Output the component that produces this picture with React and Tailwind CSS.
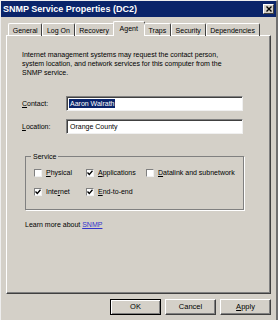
import React from "react";

const tabs = ["General", "Log On", "Recovery", "Agent", "Traps", "Security", "Dependencies"];

const font = { fontFamily: "'Liberation Sans', Arial, sans-serif" };

function Check({ checked }) {
  return (
    <span className="w-[8px] h-[8px] bg-white border border-t-[#808080] border-l-[#808080] border-r-[#f0f0f0] border-b-[#f0f0f0] flex items-center justify-center shrink-0">
      {checked && (
        <svg width="6" height="6" viewBox="0 0 6 6">
          <path d="M0.5 2.5 L2.3 4.5 L5.5 0.8" stroke="#000" strokeWidth="1.3" fill="none" />
        </svg>
      )}
    </span>
  );
}

function Box({ checked, first, rest, className = "" }) {
  return (
    <div className={`flex items-center gap-[4px] whitespace-nowrap ${className}`}>
      <Check checked={checked} />
      <span>
        <span className="underline">{first}</span>
        {rest}
      </span>
    </div>
  );
}

function Btn({ children, def }) {
  return (
    <button
      className={`w-[51px] h-[16px] bg-[#d4d0c8] text-[7.5px] text-black flex items-center justify-center ${
        def
          ? "border border-black shadow-[inset_1px_1px_0_#fff,inset_-1px_-1px_0_#808080]"
          : "border border-t-white border-l-white border-r-[#404040] border-b-[#404040] shadow-[inset_-1px_-1px_0_#808080]"
      }`}
      style={font}
    >
      {children}
    </button>
  );
}

export default function App() {
  return (
    <div
      className="w-[278px] h-[320px] bg-[#d4d0c8] text-black flex flex-col border-l border-t border-l-[#eee] border-t-[#eee] border-r-2 border-r-[#707070] overflow-hidden"
      style={font}
    >
      {/* Title bar */}
      <div className="h-[16px] bg-[#0a246a] flex items-center justify-between pl-[2px] pr-[2px] shrink-0">
        <span className="text-white font-bold text-[9px] leading-none">SNMP Service Properties (DC2)</span>
        <span className="w-[11px] h-[10px] bg-[#d4d0c8] border border-t-white border-l-white border-r-[#404040] border-b-[#404040] flex items-center justify-center">
          <svg width="6" height="6" viewBox="0 0 6 6">
            <path d="M0.5 0.5 L5.5 5.5 M5.5 0.5 L0.5 5.5" stroke="#000" strokeWidth="1.4" />
          </svg>
        </span>
      </div>

      <div className="flex-1 flex flex-col px-[5px] pt-[4px]">
        {/* Tabs */}
        <div className="flex items-end pl-[2px] h-[15px] relative z-10">
          {tabs.map((t) => {
            const active = t === "Agent";
            return (
              <div
                key={t}
                className={`text-[7px] leading-none flex items-center border-t border-l border-r border-t-white border-l-white border-r-[#404040] rounded-t-[2px] ${
                  active ? "h-[15px] bg-[#d4d0c8] -mx-[1px] px-[6px] pb-[2px]" : "h-[13px] px-[3.7px]"
                }`}
              >
                {t}
              </div>
            );
          })}
        </div>

        {/* Panel */}
        <div className="h-[259px] -mt-[1px] border border-t-white border-l-white border-r-[#404040] border-b-[#404040] shadow-[inset_-1px_-1px_0_#808080] px-[15px] pt-[14px] text-[7px] leading-[9px]">
          <p className="whitespace-nowrap">
            Internet management systems may request the contact person,
            <br />
            system location, and network services for this computer from the
            <br />
            SNMP service.
          </p>

          <div className="mt-[19px] flex items-center">
            <span className="w-[44px]">
              <span className="underline">C</span>ontact:
            </span>
            <div className="w-[177px] h-[15px] bg-white border border-t-[#808080] border-l-[#808080] border-r-[#f0f0f0] border-b-[#f0f0f0] shadow-[inset_1px_1px_0_#404040] flex items-center pl-[2px]">
              <span className="bg-[#0a246a] text-white px-[1px]">Aaron Walrath</span>
            </div>
          </div>

          <div className="mt-[8px] flex items-center">
            <span className="w-[44px]">
              <span className="underline">L</span>ocation:
            </span>
            <div className="w-[177px] h-[15px] bg-white border border-t-[#808080] border-l-[#808080] border-r-[#f0f0f0] border-b-[#f0f0f0] shadow-[inset_1px_1px_0_#404040] flex items-center pl-[3px]">
              Orange County
            </div>
          </div>

          {/* Service group */}
          <fieldset className="mt-[19px] ml-[3px] w-[219px] h-[57px] border border-[#808080] shadow-[1px_1px_0_#fff] px-[8px] pt-[8px]">
            <legend className="px-[2px] -ml-[3px] leading-none">Service</legend>
            <div className="flex">
              <Box first="P" rest="hysical" className="w-[52px]" />
              <Box checked first="A" rest="pplications" className="w-[60px]" />
              <Box first="D" rest="atalink and subnetwork" />
            </div>
            <div className="flex mt-[10px]">
              <Box checked first="" rest={<><span>Inte</span><span className="underline">r</span>net</>} className="w-[52px]" />
              <Box checked first="E" rest="nd-to-end" />
            </div>
          </fieldset>

          <p className="mt-[10px] ml-[3px]">
            Learn more about <span className="text-[#3333cc] underline">SNMP</span>
          </p>
        </div>

        {/* Buttons */}
        <div className="flex justify-end gap-[4px] mt-[5px]">
          <Btn def>OK</Btn>
          <Btn>Cancel</Btn>
          <Btn>
            <span className="underline">A</span>pply
          </Btn>
        </div>
      </div>
    </div>
  );
}
